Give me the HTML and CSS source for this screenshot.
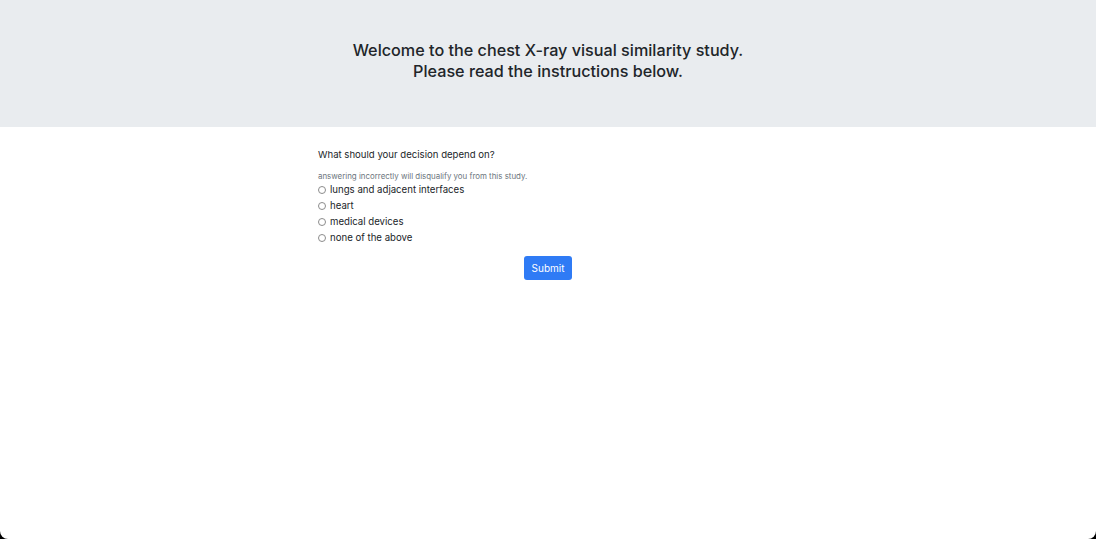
FILE: index.html
```html
<!DOCTYPE html>
<html lang="en">
<head>
<meta charset="utf-8">
<title>Chest X-ray visual similarity study</title>
<link rel="stylesheet" href="styles.css">
</head>
<body>
<div class="frame">
  <header class="jumbotron">
    <h1 class="title">Welcome to the chest X-ray visual similarity study.<br>Please read the instructions below.</h1>
  </header>
  <main class="container">
    <form class="quiz">
      <p class="question">What should your decision depend on?</p>
      <p class="note">answering incorrectly will disqualify you from this study.</p>
      <label class="option"><input type="radio" name="q"><span>lungs and adjacent interfaces</span></label>
      <label class="option"><input type="radio" name="q"><span>heart</span></label>
      <label class="option"><input type="radio" name="q"><span>medical devices</span></label>
      <label class="option"><input type="radio" name="q"><span>none of the above</span></label>
      <div class="actions"><button type="button" class="btn">Submit</button></div>
    </form>
  </main>
</div>
</body>
</html>
```
FILE: styles.css
```css
* { box-sizing: border-box; }
html, body { margin: 0; padding: 0; background: #000; }
body {
  font-family: Inter, "Noto Sans", "Liberation Sans", sans-serif;
  color: #212529;
}
.frame {
  width: 1096px;
  height: 539px;
  background: #fff;
  border-radius: 0 0 8px 8px;
  overflow: hidden;
}
.jumbotron {
  background: #e9ecef;
  height: 127px;
  padding-top: 40px;
  text-align: center;
}
.title {
  margin: 0;
  font-size: 16.2px;
  line-height: 21px;
  font-weight: 500;
  color: #212529;
}
.container {
  width: 460px;
  margin: 0 auto;
  padding-top: 20px;
}
.quiz { display: flex; flex-direction: column; }
.question {
  margin: 0 0 8px;
  font-size: 9.6px;
  line-height: 15px;
}
.note {
  margin: 0;
  font-size: 7.9px;
  line-height: 12px;
  color: #6c757d;
}
.option {
  display: flex;
  align-items: center;
  gap: 4px;
  font-size: 9.65px;
  line-height: 16px;
}
.option input {
  margin: 0;
  width: 8px;
  height: 8px;
  appearance: none;
  border: 1px solid #8c8c8c;
  border-radius: 50%;
  background: #fff;
}
.actions {
  display: flex;
  justify-content: center;
  padding-top: 10px;
}
.btn {
  font-family: inherit;
  font-size: 10px;
  line-height: 14px;
  padding: 5px 8px;
  color: #fff;
  background: #2f7bf5;
  border: none;
  border-radius: 3px;
}
```
